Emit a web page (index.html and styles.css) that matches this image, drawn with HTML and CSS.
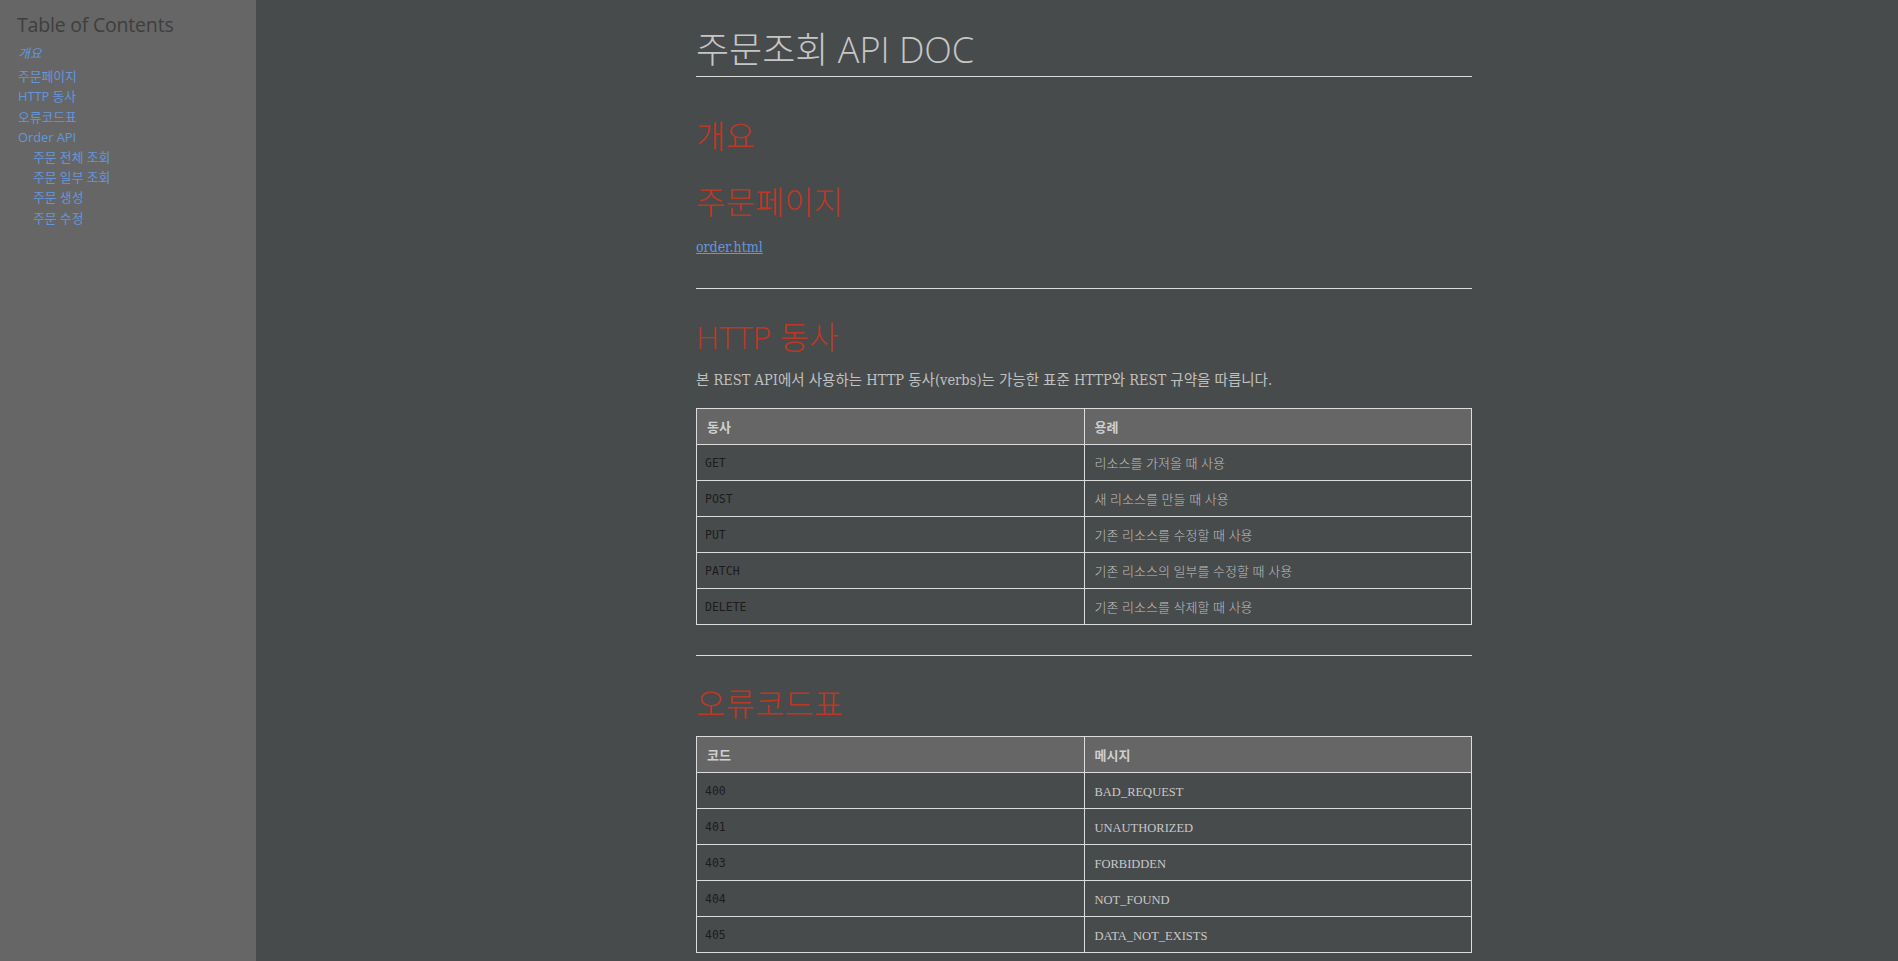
FILE: index.html
```html
<!DOCTYPE html>
<html lang="ko">
<head>
<meta charset="utf-8">
<title>주문조회 API DOC</title>
<link rel="stylesheet" href="styles.css">
</head>
<body>
<aside class="toc">
  <div class="toc-title">Table of Contents</div>
  <ul class="toc-list">
    <li><a class="toc-link toc-active" href="#overview">개요</a></li>
    <li><a class="toc-link" href="#order-page">주문페이지</a></li>
    <li><a class="toc-link" href="#http-verbs">HTTP 동사</a></li>
    <li><a class="toc-link" href="#error-codes">오류코드표</a></li>
    <li><a class="toc-link" href="#order-api">Order API</a>
      <ul class="toc-sublist">
        <li><a class="toc-link" href="#order-all">주문 전체 조회</a></li>
        <li><a class="toc-link" href="#order-some">주문 일부 조회</a></li>
        <li><a class="toc-link" href="#order-create">주문 생성</a></li>
        <li><a class="toc-link" href="#order-update">주문 수정</a></li>
      </ul>
    </li>
  </ul>
</aside>
<main class="main">
  <div class="content">
    <h1 class="doc-title">주문조회 API DOC</h1>

    <section class="sect" id="overview">
      <h2 class="sect-title sect-first">개요</h2>
    </section>

    <section class="sect" id="order-page">
      <h2 class="sect-title sect-close">주문페이지</h2>
      <p class="para"><a class="doc-link" href="order.html">order.html</a></p>
    </section>

    <hr class="rule">

    <section class="sect" id="http-verbs">
      <h2 class="sect-title">HTTP 동사</h2>
      <p class="para para-tight">본 REST API에서 사용하는 HTTP 동사(verbs)는 가능한 표준 HTTP와 REST 규약을 따릅니다.</p>
      <table class="grid grid-after-para">
        <thead>
          <tr><th class="cell-head">동사</th><th class="cell-head">용례</th></tr>
        </thead>
        <tbody>
          <tr><td class="cell cell-code"><code class="code">GET</code></td><td class="cell cell-text">리소스를 가져올 때 사용</td></tr>
          <tr><td class="cell cell-code"><code class="code">POST</code></td><td class="cell cell-text">새 리소스를 만들 때 사용</td></tr>
          <tr><td class="cell cell-code"><code class="code">PUT</code></td><td class="cell cell-text">기존 리소스를 수정할 때 사용</td></tr>
          <tr><td class="cell cell-code"><code class="code">PATCH</code></td><td class="cell cell-text">기존 리소스의 일부를 수정할 때 사용</td></tr>
          <tr><td class="cell cell-code"><code class="code">DELETE</code></td><td class="cell cell-text">기존 리소스를 삭제할 때 사용</td></tr>
        </tbody>
      </table>
    </section>

    <hr class="rule">

    <section class="sect" id="error-codes">
      <h2 class="sect-title">오류코드표</h2>
      <table class="grid grid-after-title">
        <thead>
          <tr><th class="cell-head">코드</th><th class="cell-head">메시지</th></tr>
        </thead>
        <tbody>
          <tr><td class="cell cell-code"><code class="code">400</code></td><td class="cell cell-msg">BAD_REQUEST</td></tr>
          <tr><td class="cell cell-code"><code class="code">401</code></td><td class="cell cell-msg">UNAUTHORIZED</td></tr>
          <tr><td class="cell cell-code"><code class="code">403</code></td><td class="cell cell-msg">FORBIDDEN</td></tr>
          <tr><td class="cell cell-code"><code class="code">404</code></td><td class="cell cell-msg">NOT_FOUND</td></tr>
          <tr><td class="cell cell-code"><code class="code">405</code></td><td class="cell cell-msg">DATA_NOT_EXISTS</td></tr>
        </tbody>
      </table>
    </section>
  </div>
</main>
</body>
</html>
```

FILE: styles.css
```css
html, body {
  margin: 0;
  padding: 0;
}

body {
  display: flex;
  height: 100vh;
  overflow: hidden;
  background: #484b4c;
  font-family: "Open Sans", "Noto Sans CJK KR", sans-serif;
}

.toc {
  width: 256px;
  flex-shrink: 0;
  background: #666666;
  padding: 12px 0 0 17px;
  box-sizing: border-box;
}

.toc-title {
  font-family: "Open Sans", "Noto Sans CJK KR", sans-serif;
  font-size: 19.5px;
  line-height: 26px;
  color: #3e3e3e;
  font-weight: 400;
  letter-spacing: -0.2px;
}

.toc-list,
.toc-sublist {
  list-style: none;
  margin: 0;
  padding: 0;
}

.toc-list {
  margin-top: 5px;
  margin-left: 1px;
}

.toc-sublist {
  padding-left: 15px;
}

.toc-link {
  display: block;
  font-family: "Open Sans", "Noto Sans CJK KR", sans-serif;
  font-size: 12.8px;
  line-height: 20.2px;
  color: #6496dc;
  text-decoration: none;
}

.toc-active {
  font-style: italic;
  margin-bottom: 3px;
}

.main {
  flex: 1;
  min-width: 0;
}

.content {
  width: 776px;
  margin-left: 440px;
}

.doc-title {
  margin: 0;
  padding-top: 28px;
  padding-bottom: 5px;
  font-family: "Open Sans", "Noto Sans CJK KR", sans-serif;
  font-weight: 300;
  font-size: 36px;
  line-height: 43px;
  color: #c6c6c6;
  border-bottom: 1px solid #dcdcdc;
}

.sect-title {
  margin: 29px 0 0 0;
  font-family: "Open Sans", "Noto Sans CJK KR", sans-serif;
  font-weight: 300;
  font-size: 32px;
  line-height: 38px;
  color: #ba3925;
}

.sect-first {
  margin-top: 40px;
}

.sect-close {
  margin-top: 28px;
}

.para {
  margin: 15px 0 0 0;
  font-family: "DejaVu Serif Condensed", "DejaVu Serif", "Noto Sans CJK KR", serif;
  font-stretch: condensed;
  font-size: 14px;
  line-height: 22px;
  color: #c0c0c0;
}

.para-tight {
  margin-top: 13px;
  font-size: 14.5px;
}

.doc-link {
  color: #6496dc;
  text-decoration: underline;
}

.rule {
  margin: 30px 0 0 0;
  border: 0;
  border-top: 1px solid #dcdcdc;
  height: 0;
}

.grid {
  width: 100%;
  border-collapse: collapse;
  table-layout: fixed;
}

.grid-after-para {
  margin-top: 17px;
}

.grid-after-title {
  margin-top: 13px;
}

.cell-head,
.cell {
  border: 1px solid #dcdcdc;
  padding: 0 10px;
  height: 35px;
  text-align: left;
  vertical-align: middle;
}

.cell-head {
  background: #666666;
  font-family: "Noto Sans CJK KR", sans-serif;
  font-weight: 700;
  font-size: 13px;
  color: #cfcfcf;
}

.cell-code {
  padding-left: 8px;
  padding-bottom: 3px;
  height: 32px;
}

.code {
  font-family: "DejaVu Sans Mono", monospace;
  font-size: 11.5px;
  color: #1c1c1c;
}

.cell-text {
  font-family: "Noto Sans CJK KR", sans-serif;
  font-weight: 300;
  font-size: 13px;
  color: #bdbdbd;
}

.cell-msg {
  font-family: "Liberation Serif", serif;
  font-size: 12.5px;
  color: #c8c8c8;
  padding-top: 4px;
  height: 31px;
}
```
